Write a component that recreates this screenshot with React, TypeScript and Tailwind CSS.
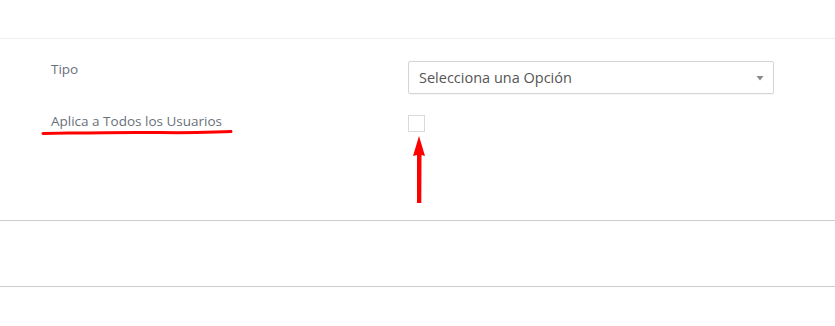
export default function App() {
  return (
    <div className="relative w-[835px] h-[326px] bg-white font-['Open_Sans','Liberation_Sans',sans-serif] overflow-hidden">
      <div className="h-[39px] border-b border-[#eeeeee]" />
      <div className="h-[181px] pl-[51px] pr-[61px] pt-[22px]">
        <div className="flex items-start">
          <label className="w-[357px] mt-[-1px] text-[13.5px] leading-[18px] text-[#68707a]">Tipo</label>
          <div className="flex-1 h-[33px] border border-[#d5d5d5] rounded-[2px] flex items-center justify-between pl-[10px] pr-[8px] shadow-[0_1px_1px_rgba(0,0,0,0.04)]">
            <span className="text-[14.5px] text-[#555555]">Selecciona una Opción</span>
            <svg width="8" height="6" viewBox="0 0 8 6" className="mr-[1px]">
              <path d="M0.5 1 L7.5 1 L4 5.5 Z" fill="#8a8a8a" />
            </svg>
          </div>
        </div>
        <div className="flex items-start mt-[18px]">
          <label className="w-[357px] text-[13.5px] leading-[18px] text-[#68707a]">Aplica a Todos los Usuarios</label>
          <div className="w-[17px] h-[17px] mt-[3px] border border-[#d9d9d9] bg-white" />
        </div>
      </div>
      <div className="h-[67px] border-t border-b border-[#cccccc]" />

      <svg className="absolute left-[40px] top-[128px]" width="196" height="10" viewBox="0 0 196 10">
        <path d="M3 5.5 C40 5, 80 4, 120 4.6 S170 4, 191 3.5" stroke="#ff0000" strokeWidth="3" fill="none" strokeLinecap="round" />
      </svg>
      <svg className="absolute left-[410px] top-[135px]" width="18" height="72" viewBox="0 0 18 72">
        <path d="M9 1 L15 21 L11.5 20 L11.3 68 L7 68 L7 20 L3 21 Z" fill="#ff0000" />
      </svg>
    </div>
  );
}
